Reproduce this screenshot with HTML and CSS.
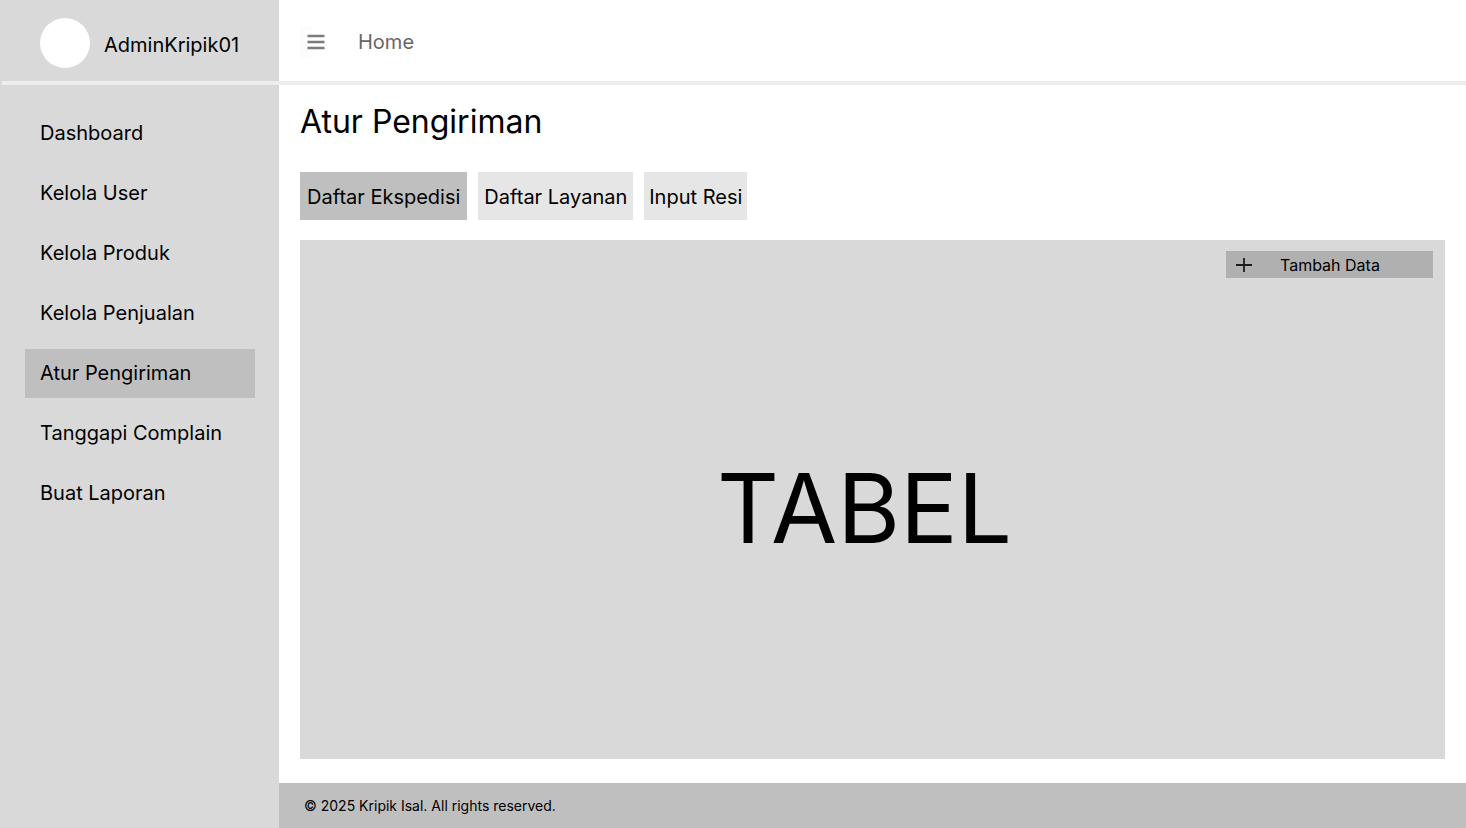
FILE: index.html
```html
<!DOCTYPE html>
<html lang="id">
<head>
<meta charset="utf-8">
<meta name="viewport" content="width=device-width, initial-scale=1">
<title>Atur Pengiriman</title>
<link rel="stylesheet" href="styles.css">
</head>
<body>
<div class="app">
  <aside class="sidebar">
    <div class="profile"><span class="avatar"></span><span class="username">AdminKripik01</span></div>
    <nav class="menu">
      <a href="#">Dashboard</a>
      <a href="#">Kelola User</a>
      <a href="#">Kelola Produk</a>
      <a href="#">Kelola Penjualan</a>
      <a href="#" class="active" aria-current="page">Atur Pengiriman</a>
      <a href="#">Tanggapi Complain</a>
      <a href="#">Buat Laporan</a>
    </nav>
  </aside>
  <div class="page">
    <header class="topbar">
      <button class="toggle" type="button" aria-label="Menu">
        <svg width="18" height="16" viewBox="0 0 18 16"><path d="M0.500 2h17M0.500 8h17M0.500 14h17" stroke="#7c7c7c" stroke-width="2.6"/></svg>
      </button>
      <a class="home" href="#">Home</a>
    </header>
    <main class="content">
      <h1 class="title">Atur Pengiriman</h1>
      <div class="tabs">
        <button type="button" class="tab selected">Daftar Ekspedisi</button>
        <button type="button" class="tab">Daftar Layanan</button>
        <button type="button" class="tab compact">Input Resi</button>
      </div>
      <section class="panel">
        <button type="button" class="add">
          <svg width="16" height="14" viewBox="0 0 16 14"><path d="M0 7h16M8 0v14" stroke="#1c1c1c" stroke-width="1.8"/></svg>
          <span class="add-label">Tambah Data</span>
        </button>
        <p class="placeholder">TABEL</p>
      </section>
    </main>
    <footer class="footer">© 2025 Kripik Isal. All rights reserved.</footer>
  </div>
</div>
</body>
</html>
```
FILE: styles.css
```css
* { box-sizing: border-box; }
body { margin: 0; font-family: Inter, "Liberation Sans", sans-serif; font-size: 20px; font-weight: 400; line-height: 24px; color: #000; background: #fff; }
button { font: inherit; color: inherit; border: 0; padding: 0; cursor: pointer; }
a { color: inherit; text-decoration: none; }
.app { display: flex; min-height: 100vh; }
.sidebar { flex: 0 0 279px; background: #d9d9d9; }
.profile { display: flex; align-items: center; gap: 14px; height: 85px; margin-left: 2px; padding: 5px 0 0 38px; border-bottom: 4px solid #ededed; }
.avatar { width: 50px; height: 50px; border-radius: 50%; background: #fff; }
.username { padding-top: 3px; }
.menu { display: flex; flex-direction: column; gap: 11px; padding: 24px 24px 0 25px; }
.menu a { height: 49px; padding: 12px 15px; white-space: nowrap; }
.menu .active { background: #bfbfbf; }
.page { flex: 1; min-width: 0; display: flex; flex-direction: column; }
.topbar { display: flex; align-items: center; height: 85px; padding: 3px 0 0 21px; border-bottom: 4px solid #ededed; }
.toggle { display: flex; align-items: center; width: 32px; height: 32px; padding-left: 7px; background: linear-gradient(90deg, #fbfbfb, #fff 60%); }
.home { margin-left: 26px; color: #666; }
.content { flex: 1; display: flex; flex-direction: column; padding: 17px 21px 24px; }
.title { margin: 0 0 30px; font-size: 32px; line-height: 40px; font-weight: 400; }
.tabs { display: flex; gap: 11px; margin-bottom: 20px; }
.tab { height: 48px; padding: 2px 6px 0; background: #e6e6e6; white-space: nowrap; }
.tab.selected { padding: 2px 7px 0; background: #bfbfbf; }
.tab.compact { padding: 2px 5px 0; }
.panel { flex: 1; display: flex; flex-direction: column; padding: 11px 12px; background: #d9d9d9; }
.add { display: flex; align-items: center; align-self: flex-end; gap: 28px; width: 207px; height: 27px; padding-left: 10px; background: #b0b0b0; font-size: 16px; }
.placeholder { margin: auto; padding: 0 16px 11px 0; font-size: 96px; line-height: 116px; }
.footer { height: 45px; padding: 11px 25px; background: #bfbfbf; font-size: 14px; }
```
